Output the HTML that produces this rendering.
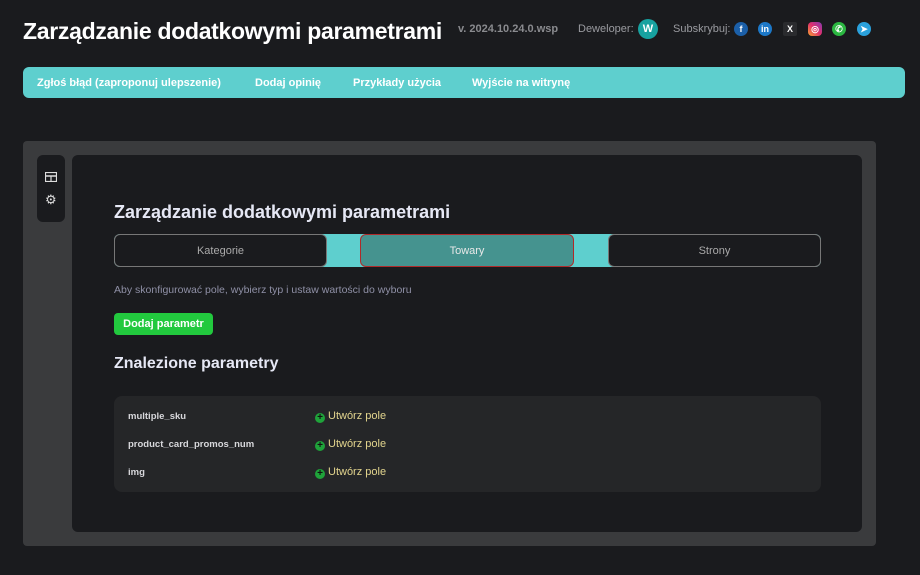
<!DOCTYPE html>
<html><head><meta charset="utf-8"><style>
*{margin:0;padding:0;box-sizing:border-box}
body{width:920px;height:575px;background:#1a1b1e;font-family:"Liberation Sans",sans-serif;position:relative;overflow:hidden;color:#fff}
.abs{position:absolute}
h1{position:absolute;left:23px;top:18px;font-size:23px;font-weight:bold;color:#fff;letter-spacing:-0.3px}
.ver{left:458px;top:23px;font-size:11px;font-weight:bold;color:#8a8b8f}
.dev{left:578px;top:23px;font-size:11px;color:#9a9ba0}
.sub{left:673px;top:23px;font-size:11px;color:#9a9ba0}
.ic{position:absolute;top:22px;width:14px;height:14px;border-radius:50%;font-size:9px;font-weight:bold;text-align:center;line-height:14px;color:#fff}
.nav{left:23px;top:67px;width:882px;height:31px;background:#5ecfce;border-radius:6px}
.nav span{position:absolute;top:10px;font-size:11px;font-weight:bold;color:#fff}
.outer{left:23px;top:141px;width:853px;height:405px;background:#3a3b3d;border-radius:4px}
.side{left:37px;top:155px;width:28px;height:67px;background:#1a1b1e;border-radius:6px}
.card{left:72px;top:155px;width:790px;height:377px;background:#1a1b1e;border-radius:6px}
.tabs{left:114px;top:234px;width:707px;height:33px;background:#5ecfce;border-radius:6px}
.tab{position:absolute;top:0;height:33px;border-radius:6px;font-size:11px;text-align:center;line-height:33px}
.list{left:114px;top:396px;width:707px;height:96px;background:#252628;border-radius:8px}
.row{position:absolute;left:14px;font-size:9.5px;font-weight:bold;color:#d8d8dc}
.act{position:absolute;left:201px;font-size:11px;color:#e3d58e}
.act i{display:inline-block;width:10px;height:10px;border-radius:50%;background:#1fa33a;color:#111;font-style:normal;font-size:10px;line-height:10px;text-align:center;font-weight:bold;margin-right:3px;vertical-align:-1px}
</style></head><body>
<h1>Zarządzanie dodatkowymi parametrami</h1>
<div class="abs ver">v. 2024.10.24.0.wsp</div>
<div class="abs dev">Deweloper:</div>
<div class="ic" style="left:638px;top:19px;width:20px;height:20px;line-height:20px;background:#17a2a0;font-size:11px">W</div>
<div class="abs sub">Subskrybuj:</div>
<div class="ic" style="left:734px;background:#1b5fa8">f</div>
<div class="ic" style="left:758px;background:#1c78c8">in</div>
<div class="ic" style="left:783px;background:#2a2b2e;border-radius:2px">X</div>
<div class="ic" style="left:808px;background:linear-gradient(45deg,#f8a530,#e1306c,#833ab4);border-radius:4px">◎</div>
<div class="ic" style="left:832px;background:#2bb741">✆</div>
<div class="ic" style="left:857px;background:#2aa1dc">➤</div>
<div class="abs nav">
<span style="left:14px">Zgłoś błąd (zaproponuj ulepszenie)</span>
<span style="left:232px">Dodaj opinię</span>
<span style="left:330px">Przykłady użycia</span>
<span style="left:449px">Wyjście na witrynę</span>
</div>
<div class="abs outer"></div>
<div class="abs side">
<svg class="abs" style="left:8px;top:17px" width="12" height="10" viewBox="0 0 12 10"><rect x="0.5" y="0.5" width="11" height="9" fill="none" stroke="#ddd" stroke-width="1.2"/><line x1="0" y1="4" x2="12" y2="4" stroke="#ddd" stroke-width="1.5"/><line x1="6" y1="4" x2="6" y2="10" stroke="#ddd" stroke-width="1.2"/></svg>
<div class="abs" style="left:8px;top:39px;font-size:13px;color:#ddd;line-height:12px">⚙</div>
</div>
<div class="abs card"></div>
<div class="abs" style="left:114px;top:202px;font-size:18px;font-weight:bold;color:#e6e8f5">Zarządzanie dodatkowymi parametrami</div>
<div class="abs tabs">
<div class="tab" style="left:0;width:213px;background:#1a1b1e;border:1px solid #777;color:#aaa">Kategorie</div>
<div class="tab" style="left:246px;width:214px;background:#45938f;border:1px solid #b02a2a;color:#e8e8e8">Towary</div>
<div class="tab" style="left:494px;width:213px;background:#1a1b1e;border:1px solid #777;color:#aaa">Strony</div>
</div>
<div class="abs" style="left:114px;top:284px;font-size:10.5px;color:#8f90a6">Aby skonfigurować pole, wybierz typ i ustaw wartości do wyboru</div>
<div class="abs" style="left:114px;top:313px;width:99px;height:22px;background:#22c93e;border-radius:4px;font-size:11px;font-weight:bold;color:#fff;text-align:center;line-height:22px">Dodaj parametr</div>
<div class="abs" style="left:114px;top:355px;font-size:16px;font-weight:bold;color:#e6e8f5">Znalezione parametry</div>
<div class="abs list">
<div class="row" style="top:15px">multiple_sku</div><div class="act" style="top:14px"><i>+</i>Utwórz pole</div>
<div class="row" style="top:43px">product_card_promos_num</div><div class="act" style="top:42px"><i>+</i>Utwórz pole</div>
<div class="row" style="top:71px">img</div><div class="act" style="top:70px"><i>+</i>Utwórz pole</div>
</div>
</body></html>
